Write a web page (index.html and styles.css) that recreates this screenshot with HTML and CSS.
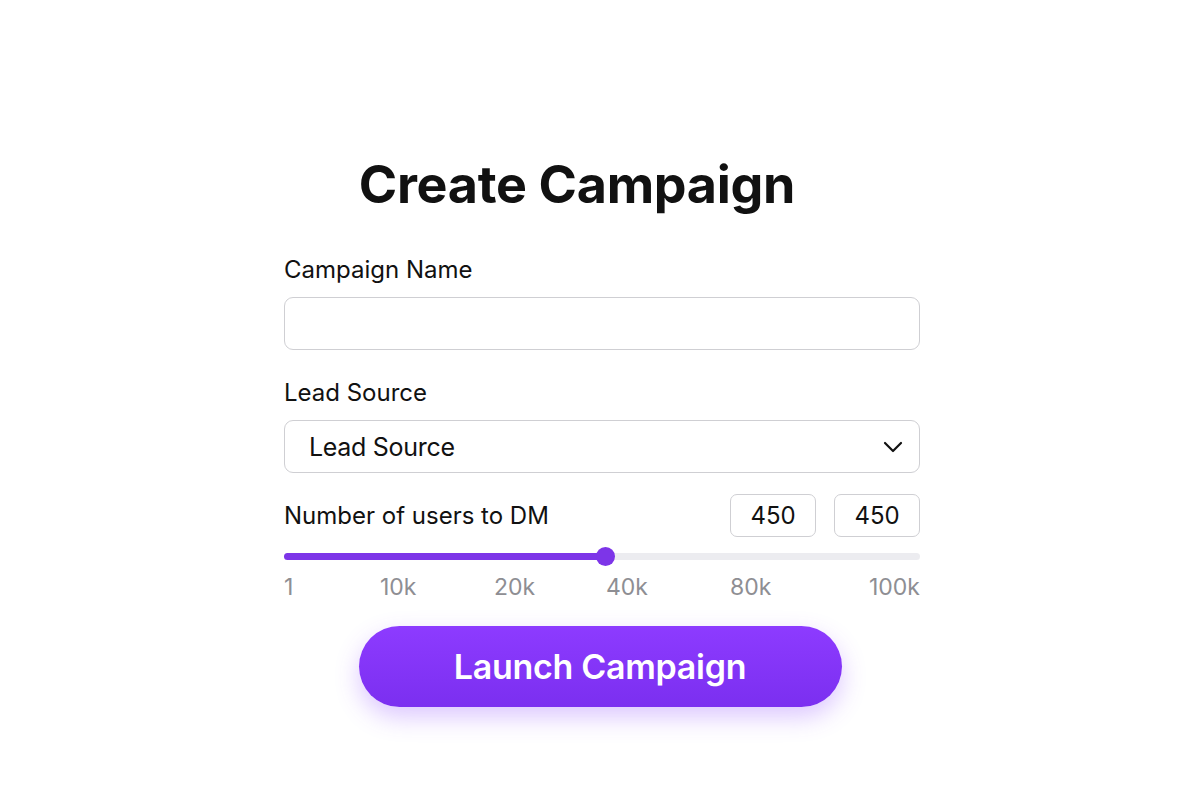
FILE: index.html
```html
<!DOCTYPE html>
<html lang="en">
<head>
    <meta charset="UTF-8">
    <meta name="viewport" content="width=device-width, initial-scale=1.0">
    <title>Create Campaign</title>
    <link rel="stylesheet" href="styles.css">
</head>
<body>
    <div class="page">
        <form class="campaign-form">
            <h1 class="title">Create Campaign</h1>

            <!-- Campaign name -->
            <div class="field">
                <label class="label" for="campaign-name">Campaign Name</label>
                <input class="text-input" id="campaign-name" type="text">
            </div>

            <!-- Lead source -->
            <div class="field">
                <label class="label" for="lead-source">Lead Source</label>
                <div class="select-box" id="lead-source">
                    <span>Lead Source</span>
                    <svg class="chevron" width="20" height="12" viewBox="0 0 20 12">
                        <path d="M2 2l8 8 8-8" fill="none" stroke="#111" stroke-width="2.2" stroke-linecap="round" stroke-linejoin="round"/>
                    </svg>
                </div>
            </div>

            <!-- Users slider -->
            <div class="range-field">
                <div class="range-head">
                    <span class="label">Number of users to DM</span>
                    <div class="range-values">
                        <div class="value-box">450</div>
                        <div class="value-box">450</div>
                    </div>
                </div>
                <div class="slider">
                    <div class="slider-fill" style="width: 50.5%"></div>
                    <div class="slider-thumb" style="left: 50.5%"></div>
                </div>
                <div class="ticks">
                    <span>1</span>
                    <span>10k</span>
                    <span>20k</span>
                    <span>40k</span>
                    <span>80k</span>
                    <span>100k</span>
                </div>
            </div>

            <button type="button" class="launch-btn">Launch Campaign</button>
        </form>
    </div>
</body>
</html>
```

FILE: styles.css
```css
* {
    margin: 0;
    padding: 0;
    box-sizing: border-box;
}

body, html {
    width: 100%;
    height: 100%;
    background: #fff;
    font-family: Inter, "Noto Sans", sans-serif;
    color: #111;
}

.page {
    display: flex;
    justify-content: center;
    padding-top: 152px;
}

.campaign-form {
    width: 636px;
    margin-left: 4px;
    display: flex;
    flex-direction: column;
}

.title {
    font-size: 52px;
    font-weight: 700;
    text-align: center;
    padding-right: 50px;
    letter-spacing: -0.3px;
    line-height: 66px;
    margin-bottom: 37px;
}

.field {
    display: flex;
    flex-direction: column;
    margin-bottom: 28px;
}

.label {
    font-size: 24px;
    font-weight: 400;
    letter-spacing: 0;
    line-height: 30px;
    margin-bottom: 12px;
}

.text-input {
    height: 53px;
    border: 1.5px solid #cfcfd3;
    border-radius: 9px;
    font: inherit;
    outline: none;
}

.select-box {
    height: 53px;
    border: 1.5px solid #cfcfd3;
    border-radius: 9px;
    display: flex;
    align-items: center;
    justify-content: space-between;
    padding: 0 16px 0 24px;
    font-size: 25px;
    letter-spacing: -0.3px;
}

.range-field {
    display: flex;
    flex-direction: column;
    margin-top: -7px;
}

.range-head {
    display: flex;
    justify-content: space-between;
    align-items: center;
}

.range-head .label {
    margin-bottom: 0;
}

.range-values {
    display: flex;
    gap: 18px;
}

.value-box {
    width: 86px;
    height: 43px;
    border: 1.5px solid #cfcfd3;
    border-radius: 7px;
    display: flex;
    align-items: center;
    justify-content: center;
    font-size: 24px;
}

.slider {
    position: relative;
    height: 7px;
    margin-top: 16px;
    background: #ececf0;
    border-radius: 4px;
}

.slider-fill {
    height: 100%;
    background: #7d35e8;
    border-radius: 4px;
}

.slider-thumb {
    position: absolute;
    top: 50%;
    width: 19px;
    height: 19px;
    margin: -9.5px 0 0 -9.5px;
    border-radius: 50%;
    background: #7d35e8;
}

.ticks {
    display: grid;
    grid-template-columns: 96px 114px 112px 124px 1fr auto;
    margin-top: 12px;
    font-size: 23px;
    color: #8e8e93;
    line-height: 30px;
}

.launch-btn {
    align-self: center;
    margin: 24px 0 0 -4px;
    width: 483px;
    height: 81px;
    border: none;
    border-radius: 41px;
    background: linear-gradient(180deg, #8d3bff 0%, #7b2ff0 100%);
    color: #fff;
    font-family: Inter, sans-serif;
    font-size: 34px;
    font-weight: 600;
    letter-spacing: -0.3px;
    box-shadow: 0 10px 24px rgba(140, 70, 255, 0.3);
    cursor: pointer;
}
```
